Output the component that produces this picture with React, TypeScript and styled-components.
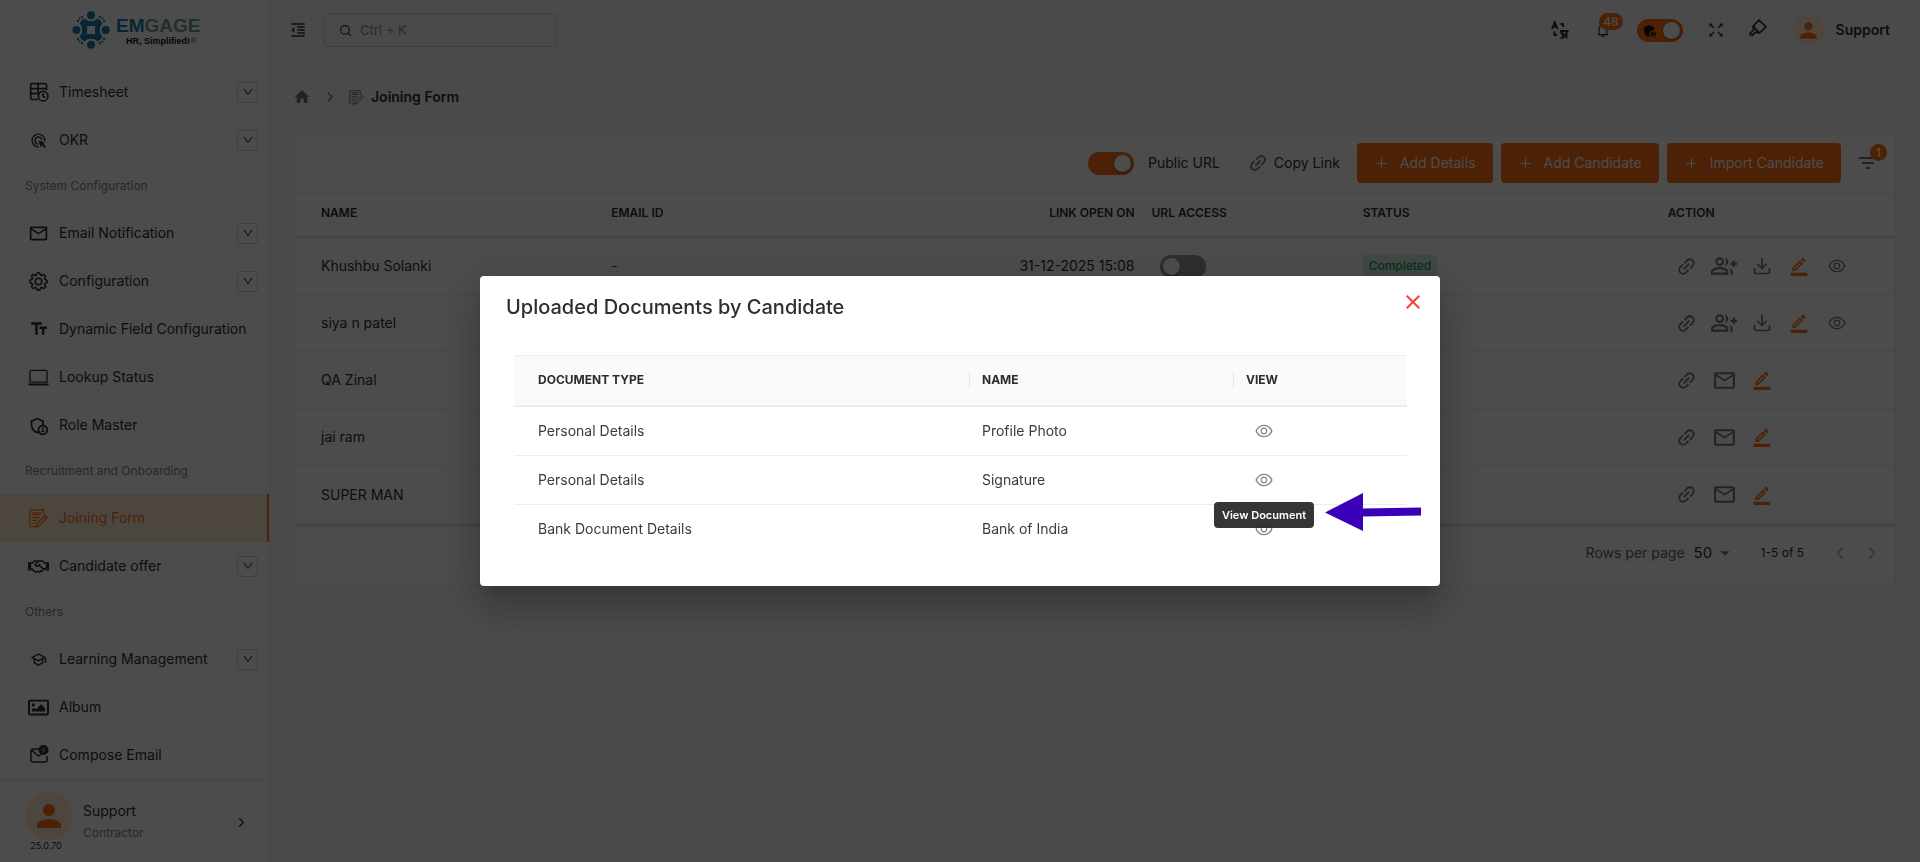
import React from "react";
import styled, { createGlobalStyle, css } from "styled-components";
import {
  MdAdsClick, MdMailOutline, MdTextFields, MdOutlineAdminPanelSettings, MdAdminPanelSettings,
  MdOutlineSchool, MdFormatIndentDecrease, MdPerson, MdHome, MdLink,
  MdOutlineGroupAdd, MdOutlineBorderColor, MdFilterList, MdArrowDropDown,
} from "react-icons/md";
import { BsLaptop, BsGear } from "react-icons/bs";
import { FaRegHandshake, FaRegImage } from "react-icons/fa";
import { AiOutlineBell, AiOutlineEye, AiOutlineDown, AiOutlinePlus } from "react-icons/ai";
import { LuChevronLeft, LuChevronRight, LuDownload, LuSearch } from "react-icons/lu";

const c = {
  orange: "#fd7011",
  ink: "#2f2f33",
  text: "#3a3a3f",
  muted: "#858585",
  line: "#ececec",
};

const Global = createGlobalStyle`
  *, *::before, *::after { box-sizing: border-box; }
  body {
    margin: 0;
    font-family: Inter, "Liberation Sans", sans-serif;
    font-size: 14px;
    line-height: 20px;
    color: ${c.ink};
    background: #f8f8f8;
  }
  button, input, select { font: inherit; color: inherit; }
  svg { display: block; flex: none; }
`;

/* ---------- drawings ---------- */

const TimesheetIcon = () => (
  <svg width="20" height="20" viewBox="0 0 24 24" fill="none" stroke="currentColor" strokeWidth="2">
    <path d="M11 21H4a2 2 0 0 1-2-2V4a2 2 0 0 1 2-2h15a2 2 0 0 1 2 2v6M2 8h19M2 14h9M11 2v12" />
    <circle cx="17" cy="17" r="5.700" />
    <path d="M17 13.500v3.500l2.500 1.500" />
  </svg>
);

const FormIcon = ({ size }: { size: number }) => (
  <svg width={size} height={size} viewBox="0 0 20 20" fill="none" stroke="currentColor" strokeWidth="1.300">
    <path d="M15 6V1H1v17.500h8" />
    <path d="M3.500 4h9M3.500 6h9M3.500 9h8M3.500 12h5M3.500 15h4" />
    <path d="M17 6.500l2.300 2.200-8.300 9-3.200 1.300.8-3.300zM15.300 8.300l2.300 2.200" />
  </svg>
);

const ComposeIcon = () => (
  <svg width="20" height="20" viewBox="0 0 20 20" fill="none" stroke="currentColor" strokeWidth="1.500">
    <path d="M10 4H4a2 2 0 0 0-2 2v9a2 2 0 0 0 2 2h12a2 2 0 0 0 2-2v-4M2.500 5l7 6 3-2" />
    <circle cx="14.500" cy="5" r="5" fill="currentColor" stroke="none" />
    <path d="M14.500 2.500v5M12 5h5" stroke="#fff" strokeWidth="1" opacity=".5" />
  </svg>
);

const TranslateIcon = () => (
  <svg width="18" height="18" viewBox="0 0 18 18" fill="none" stroke="currentColor" strokeWidth="1.900">
    <path d="M1 8l2.700-7L6.500 8M2 5.800h3.500" />
    <path d="M9.500 3H12v3M3.500 10.500V14H6" />
    <path d="M9 10h8.500M15.500 10v7.500M9.500 12.300c2.500-1 3.500 1 1.500 1.800 3 .2 2 3.400-1.500 2.400M12 14.200h3.500" />
  </svg>
);

const ExpandIcon = () => (
  <svg width="14" height="14" viewBox="0 0 14 14" fill="none" stroke="currentColor" strokeWidth="1.200">
    <path d="M1 3.500V1h2.500M1 1l4 4M10.500 1H13v2.500M13 1L9 5M1 10.500V13h2.500M1 13l4-4M10.500 13H13v-2.500M13 13L9 9" />
  </svg>
);

const BrushIcon = () => (
  <svg width="18" height="22" viewBox="0 0 18 22" fill="none" stroke="currentColor" strokeWidth="1.700" strokeLinejoin="round">
    <path d="M10 1l7 6.800-6.500 6-6.500-6.500zM5.500 6.500L4 8.500l1 2-3.500 3.500c-1.200 1.500.5 3.200 2 2L7 12.800l2 1.200 1.500-.5" />
  </svg>
);

const CloseIcon = () => (
  <svg width="14" height="14" viewBox="0 0 14 14" fill="none" stroke="currentColor" strokeWidth="2">
    <path d="M.7.700l12.600 12.600M13.300.700L.7 13.300" />
  </svg>
);

const LogoMark = () => (
  <svg width="38" height="38" viewBox="0 0 38 38" fill="#1b7cab">
    {[0, 90, 180, 270].map((a) => (
      <g key={a} transform={`rotate(${a} 19 19)`}>
        <circle cx="19" cy="4.300" r="4" />
        <path d="M12.500 7.500c2 2 4 2.700 6.500 2.700s4.500-.7 6.500-2.700l3 2c-1.500 3-4 5-6 5.500h-7c-2-.5-4.500-2.500-6-5.500z" />
        <circle cx="10" cy="6" r="1.200" />
        <circle cx="7.500" cy="7.500" r="1" />
        <circle cx="28" cy="6" r="1.200" />
      </g>
    ))}
  </svg>
);

/* ---------- shared controls ---------- */

const IconButton = styled.button<{ $tone?: string }>`
  display: inline-flex;
  align-items: center;
  justify-content: center;
  padding: 0;
  border: 0;
  background: none;
  color: ${(p) => p.$tone ?? c.ink};
  cursor: pointer;
`;

const Switch = styled.input.attrs({ type: "checkbox" })`
  appearance: none;
  flex: none;
  width: 46px;
  height: 23px;
  margin: 0;
  padding: 3px;
  border-radius: 12px;
  background: #9a9a9a;
  display: flex;
  cursor: pointer;
  &::before {
    content: "";
    width: 17px;
    height: 17px;
    border-radius: 50%;
    background: #fff;
    box-shadow: 0 1px 3px rgba(0, 0, 0, 0.4);
  }
  &:checked {
    background: ${c.orange};
    justify-content: flex-end;
  }
`;

const Badge = styled.span`
  position: absolute;
  top: -9px;
  right: -12px;
  min-width: 17px;
  height: 17px;
  padding: 0 4px;
  border-radius: 9px;
  background: ${c.orange};
  color: #fff;
  font-size: 12px;
  font-weight: 500;
  line-height: 17px;
  text-align: center;
`;

const Avatar = styled.span<{ $size: number }>`
  display: flex;
  align-items: center;
  justify-content: center;
  width: ${(p) => p.$size}px;
  height: ${(p) => p.$size}px;
  border-radius: 50%;
  background: #fdead2;
  color: ${c.orange};
`;

/* ---------- shell ---------- */

const Shell = styled.div`
  display: grid;
  grid-template-columns: 270px minmax(0, 1fr);
  min-height: 100vh;
`;

const Sidebar = styled.aside`
  display: flex;
  flex-direction: column;
  background: #fff;
  border-right: 1px solid ${c.line};
`;

const Brand = styled.a`
  display: flex;
  gap: 6px;
  height: 68px;
  padding: 11px 0 0 72px;
  text-decoration: none;
`;

const BrandText = styled.span`
  display: flex;
  flex-direction: column;
  padding-top: 6px;
  font-family: "Liberation Sans Narrow", "Liberation Sans", sans-serif;
  font-weight: 700;
`;

const BrandName = styled.span`
  font-size: 19px;
  line-height: 18px;
  color: #1b7cab;
  span { color: #6ca58c; }
`;

const BrandTag = styled.span`
  padding-left: 10px;
  font-size: 9px;
  line-height: 13px;
  color: #111;
  white-space: nowrap;
  span { color: #1b7cab; font-weight: 400; }
`;

const NavLink = styled.a<{ $active?: boolean }>`
  display: flex;
  align-items: center;
  gap: 10px;
  height: 48px;
  padding: 0 11px 0 28px;
  color: ${(p) => (p.$active ? c.orange : c.ink)};
  text-decoration: none;
  white-space: nowrap;
  ${(p) => p.$active && css`
    background: #fdead2;
    border-right: 2px solid ${c.orange};
  `}
`;

const NavIcon = styled.span`
  display: flex;
  justify-content: center;
  width: 21px;
`;

const Chevron = styled.span`
  display: flex;
  align-items: center;
  justify-content: center;
  width: 21px;
  height: 21px;
  margin-left: auto;
  border: 1px solid #d4d4d4;
  border-radius: 3px;
`;

const NavLabel = styled.div`
  height: 45px;
  padding: 12px 0 0 25px;
  font-size: 12px;
  color: ${c.muted};
`;

const Profile = styled.div`
  display: flex;
  gap: 10px;
  flex: 1;
  padding: 12px 20px 0 25px;
  border-top: 1px solid #e6e6e6;
`;

const Version = styled.div`
  font-size: 9px;
  line-height: 12px;
  text-align: center;
  padding-right: 6px;
`;

const ProfileName = styled.div`
  flex: 1;
  padding-top: 9px;
  small { display: block; font-size: 12px; line-height: 24px; color: ${c.muted}; }
`;

const ProfileButton = styled(IconButton)`
  height: 60px;
`;

const Main = styled.main`
  display: flex;
  flex-direction: column;
`;

const TopBar = styled.header`
  display: flex;
  align-items: center;
  justify-content: space-between;
  height: 62px;
  padding: 0 30px 1px 19px;
  border-bottom: 1px solid ${c.line};
`;

const Group = styled.div<{ $gap: number }>`
  display: flex;
  align-items: center;
  gap: ${(p) => p.$gap}px;
`;

const SearchBox = styled.label`
  display: flex;
  align-items: center;
  gap: 6px;
  width: 233px;
  height: 34px;
  padding: 0 14px;
  border: 1px solid #d4d4d4;
  border-radius: 4px;
  input {
    width: 100%;
    border: 0;
    outline: 0;
    background: none;
    font-size: 13px;
    &::placeholder { color: #8f8f8f; opacity: 1; }
  }
`;

const BellWrap = styled(IconButton)`
  position: relative;
`;

const RoleToggle = styled.label`
  display: flex;
  position: relative;
  svg { position: absolute; left: 5px; top: 4px; color: #22160c; }
`;

const UserName = styled.span`
  font-weight: 600;
`;

const Crumbs = styled.nav`
  display: flex;
  align-items: center;
  height: 72px;
  padding: 0 0 2px 23px;
  font-weight: 600;
  color: #77777a;
  svg:nth-of-type(2) { margin: 0 11px; }
  span { color: ${c.ink}; margin-left: 7px; }
`;

const Card = styled.section`
  margin: 0 24px 0 25px;
  border: 1px solid ${c.line};
  border-radius: 4px;
  background: #fff;
`;

const Toolbar = styled.div`
  display: flex;
  align-items: center;
  justify-content: flex-end;
  height: 59px;
  padding: 0 15px 2px 0;
  border-bottom: 1px solid ${c.line};
`;

const SwitchLabel = styled.label`
  display: flex;
  align-items: center;
  gap: 14px;
  margin-right: 27px;
`;

const CopyLink = styled(IconButton)`
  gap: 5px;
  margin-right: 17px;
  svg { transform: rotate(-45deg); color: #77777a; }
`;

const Primary = styled.button`
  display: flex;
  align-items: center;
  gap: 11px;
  height: 40px;
  margin-right: 8px;
  padding: 0 17px;
  border: 0;
  border-radius: 4px;
  background: ${c.orange};
  color: #fff;
  white-space: nowrap;
  cursor: pointer;
`;

const FilterButton = styled(IconButton)`
  position: relative;
  margin-left: 7px;
`;

const FilterBadge = styled(Badge)`
  top: -7px;
  right: -7px;
`;

const Grid = styled.table`
  width: 100%;
  table-layout: fixed;
  border-collapse: separate;
  border-spacing: 0;
  th {
    height: 44px;
    padding: 0 10px 5px;
    border-bottom: 2px solid #e4e4e4;
    font-size: 12px;
    font-weight: 600;
    text-align: left;
  }
  td {
    height: 57px;
    padding: 0 10px;
    border-bottom: 1px solid ${c.line};
  }
  th:first-child, td:first-child { padding-left: 25px; }
  th:nth-child(3), td:nth-child(3) { text-align: right; }
  th:nth-child(4) { padding-left: 7px; }
  td:nth-child(4) { padding-left: 15px; }
  tbody tr:last-child td { height: 58px; }
`;

const Completed = styled.span`
  display: inline-block;
  padding: 0 6px;
  border-radius: 3px;
  background: #d6efe2;
  color: #1c9a5e;
  font-size: 12px;
  font-weight: 500;
  line-height: 22px;
`;

const Actions = styled.div`
  display: grid;
  grid-template-columns: repeat(5, 1fr);
  width: 188px;
  justify-items: center;
`;

const TiltedLink = styled(MdLink)`
  transform: rotate(-45deg);
`;

const Pager = styled.footer`
  display: flex;
  align-items: center;
  justify-content: flex-end;
  height: 60px;
  padding: 0 13px 5px 0;
  border-top: 3px solid #e6e6e6;
`;

const RowsLabel = styled.label`
  display: flex;
  align-items: center;
  gap: 9px;
  margin-right: 25px;
  color: #66666a;
`;

const RowsSelect = styled.span`
  display: flex;
  align-items: center;
  color: ${c.ink};
  select {
    appearance: none;
    width: 20px;
    padding: 0;
    border: 0;
    outline: 0;
    background: none;
    font-size: 15px;
  }
`;

const Range = styled.span`
  margin-right: 26px;
  font-size: 12px;
`;

/* ---------- dialog ---------- */

const Backdrop = styled.div`
  position: fixed;
  inset: 0;
  display: flex;
  align-items: center;
  justify-content: center;
  background: rgba(0, 0, 0, 0.7);
`;

const Dialog = styled.div`
  position: relative;
  width: 100%;
  max-width: 960px;
  padding: 17px 33px 32px 34px;
  border-radius: 4px;
  background: #fff;
  box-shadow: 0 11px 15px -7px rgba(0, 0, 0, 0.2), 0 24px 38px 3px rgba(0, 0, 0, 0.14),
    0 9px 46px 8px rgba(0, 0, 0, 0.12);
`;

const DialogHead = styled.div`
  display: flex;
  align-items: flex-start;
  justify-content: space-between;
  height: 62px;
  margin: 0 -13px 0 -8px;
  h2 { margin: 0; font-size: 20px; line-height: 28px; font-weight: 500; }
`;

const CloseButton = styled(IconButton)`
  height: 16px;
  align-items: flex-end;
`;

const DocTable = styled.table`
  width: 100%;
  table-layout: fixed;
  border-collapse: separate;
  border-spacing: 0;
  color: ${c.text};
  th {
    height: 52px;
    padding: 0 0 1px;
    border-top: 1px solid #ededed;
    border-bottom: 2px solid #ececec;
    background: #fafafa;
    color: #2c2c2e;
    font-size: 12px;
    line-height: 18px;
    font-weight: 700;
    text-align: left;
  }
  th span { display: block; padding-left: 12px; border-left: 1px solid #e9e9e9; }
  td { height: 49px; padding: 0 0 0 13px; border-bottom: 1px solid #ededed; }
  tr > :first-child { padding-left: 24px; }
  th:first-child span { padding-left: 0; border: 0; }
  tbody tr:last-child td { border-bottom-color: transparent; }
  td:last-child { padding: 0 0 2px 21px; }
`;

const ViewButton = styled(IconButton)`
  position: relative;
  vertical-align: middle;
`;

const Tooltip = styled.span`
  position: absolute;
  left: 50%;
  bottom: 11px;
  transform: translateX(-50%);
  padding: 0 8px;
  border-radius: 4px;
  background: rgba(40, 40, 42, 0.94);
  color: #fff;
  font-size: 11px;
  font-weight: 600;
  line-height: 26px;
  white-space: nowrap;
`;

const Pointer = styled.svg`
  position: absolute;
  right: 19px;
  bottom: 55px;
`;

/* ---------- data ---------- */

type NavItem = { label: string; icon?: React.ReactNode; open?: boolean; active?: boolean };

const nav: NavItem[] = [
  { label: "Timesheet", icon: <TimesheetIcon />, open: true },
  { label: "OKR", icon: <MdAdsClick size={17} />, open: true },
  { label: "System Configuration" },
  { label: "Email Notification", icon: <MdMailOutline size={21} />, open: true },
  { label: "Configuration", icon: <BsGear size={19} strokeWidth={0.5} />, open: true },
  { label: "Dynamic Field Configuration", icon: <MdTextFields size={20} /> },
  { label: "Lookup Status", icon: <BsLaptop size={21} /> },
  { label: "Role Master", icon: <MdOutlineAdminPanelSettings size={21} /> },
  { label: "Recruitment and Onboarding" },
  { label: "Joining Form", icon: <FormIcon size={19} />, active: true },
  { label: "Candidate offer", icon: <FaRegHandshake size={21} />, open: true },
  { label: "Others" },
  { label: "Learning Management", icon: <MdOutlineSchool size={17} />, open: true },
  { label: "Album", icon: <FaRegImage size={21} /> },
  { label: "Compose Email", icon: <ComposeIcon /> },
];

const candidates = [
  { name: "Khushbu Solanki", email: "-", opened: "31-12-2025 15:08", urlAccess: true, done: true },
  { name: "siya n patel", done: true },
  { name: "QA Zinal" },
  { name: "jai ram" },
  { name: "SUPER MAN" },
];

const documents = [
  ["Personal Details", "Profile Photo"],
  ["Personal Details", "Signature"],
  ["Bank Document Details", "Bank of India"],
];

const gray = "#77777a";

export default function App() {
  return (
    <>
      <Global />
      <Shell>
        <Sidebar>
          <Brand href="#home">
            <LogoMark />
            <BrandText>
              <BrandName>EM<span>GAGE</span></BrandName>
              <BrandTag>HR, Simplified!<span>®</span></BrandTag>
            </BrandText>
          </Brand>
          <nav>
            {nav.map((n) =>
              n.icon ? (
                <NavLink key={n.label} href="#nav" $active={n.active}>
                  <NavIcon>{n.icon}</NavIcon>
                  {n.label}
                  {n.open && <Chevron><AiOutlineDown size={12} /></Chevron>}
                </NavLink>
              ) : (
                <NavLabel key={n.label}>{n.label}</NavLabel>
              )
            )}
          </nav>
          <Profile>
            <div>
              <Avatar $size={48}><MdPerson size={36} /></Avatar>
              <Version>25.0.70</Version>
            </div>
            <ProfileName>Support<small>Contractor</small></ProfileName>
            <ProfileButton aria-label="Open profile"><LuChevronRight size={15} /></ProfileButton>
          </Profile>
        </Sidebar>

        <Main>
          <TopBar>
            <Group $gap={17}>
              <IconButton aria-label="Collapse menu"><MdFormatIndentDecrease size={18} /></IconButton>
              <SearchBox>
                <LuSearch size={13} />
                <input placeholder="Ctrl + K" aria-label="Search" />
              </SearchBox>
            </Group>
            <Group $gap={26}>
              <IconButton aria-label="Language"><TranslateIcon /></IconButton>
              <BellWrap aria-label="Notifications"><AiOutlineBell size={16} /><Badge>48</Badge></BellWrap>
              <RoleToggle>
                <Switch defaultChecked aria-label="Admin mode" />
                <MdAdminPanelSettings size={16} />
              </RoleToggle>
              <IconButton aria-label="Full screen"><ExpandIcon /></IconButton>
              <IconButton aria-label="Theme"><BrushIcon /></IconButton>
              <Group $gap={11}>
                <Avatar $size={32}><MdPerson size={25} /></Avatar>
                <UserName>Support</UserName>
              </Group>
            </Group>
          </TopBar>

          <Crumbs aria-label="Breadcrumb">
            <MdHome size={18} />
            <LuChevronRight size={16} />
            <FormIcon size={15} />
            <span>Joining Form</span>
          </Crumbs>

          <Card>
            <Toolbar>
              <SwitchLabel><Switch defaultChecked />Public URL</SwitchLabel>
              <CopyLink><MdLink size={22} />Copy Link</CopyLink>
              <Primary><AiOutlinePlus size={15} />Add Details</Primary>
              <Primary><AiOutlinePlus size={15} />Add Candidate</Primary>
              <Primary><AiOutlinePlus size={15} />Import Candidate</Primary>
              <FilterButton aria-label="Filter" $tone={gray}><MdFilterList size={24} /><FilterBadge>1</FilterBadge></FilterButton>
            </Toolbar>
            <Grid>
              <colgroup>
                <col style={{ width: 305 }} /><col style={{ width: 300 }} /><col style={{ width: 243 }} />
                <col style={{ width: 208 }} /><col style={{ width: 305 }} /><col style={{ width: 237 }} />
              </colgroup>
              <thead>
                <tr><th>NAME</th><th>EMAIL ID</th><th>LINK OPEN ON</th><th>URL ACCESS</th><th>STATUS</th><th>ACTION</th></tr>
              </thead>
              <tbody>
                {candidates.map((r) => (
                  <tr key={r.name}>
                    <td>{r.name}</td>
                    <td>{r.email}</td>
                    <td>{r.opened}</td>
                    <td>{r.urlAccess && <Switch aria-label={`URL access for ${r.name}`} />}</td>
                    <td>{r.urlAccess && <Completed>Completed</Completed>}</td>
                    <td>
                      <Actions>
                        <IconButton aria-label="Link" $tone={gray}><TiltedLink size={23} /></IconButton>
                        {r.done ? (
                          <>
                            <IconButton aria-label="Assign" $tone={gray}><MdOutlineGroupAdd size={26} /></IconButton>
                            <IconButton aria-label="Download" $tone={gray}><LuDownload size={20} /></IconButton>
                          </>
                        ) : (
                          <IconButton aria-label="Mail" $tone={gray}><MdMailOutline size={25} /></IconButton>
                        )}
                        <IconButton aria-label="Edit" $tone={c.orange}><MdOutlineBorderColor size={20} /></IconButton>
                        {r.done && <IconButton aria-label="View" $tone={gray}><AiOutlineEye size={20} /></IconButton>}
                      </Actions>
                    </td>
                  </tr>
                ))}
              </tbody>
            </Grid>
            <Pager>
              <RowsLabel>
                Rows per page
                <RowsSelect>
                  <select defaultValue="50"><option>50</option></select>
                  <MdArrowDropDown size={22} color={gray} />
                </RowsSelect>
              </RowsLabel>
              <Range>1-5 of 5</Range>
              <Group $gap={12}>
                <IconButton aria-label="Previous page" $tone="#b4b4b4"><LuChevronLeft size={20} /></IconButton>
                <IconButton aria-label="Next page" $tone="#b4b4b4"><LuChevronRight size={20} /></IconButton>
              </Group>
            </Pager>
          </Card>
        </Main>
      </Shell>

      <Backdrop>
        <Dialog role="dialog" aria-labelledby="docs-title">
          <DialogHead>
            <h2 id="docs-title">Uploaded Documents by Candidate</h2>
            <CloseButton aria-label="Close" $tone="#f44336"><CloseIcon /></CloseButton>
          </DialogHead>
          <DocTable>
            <colgroup>
              <col style={{ width: 455 }} /><col style={{ width: 264 }} /><col style={{ width: 174 }} />
            </colgroup>
            <thead>
              <tr><th><span>DOCUMENT TYPE</span></th><th><span>NAME</span></th><th><span>VIEW</span></th></tr>
            </thead>
            <tbody>
              {documents.map(([type, name], i) => (
                <tr key={name}>
                  <td>{type}</td>
                  <td>{name}</td>
                  <td>
                    <ViewButton aria-label="View Document" $tone="#858585">
                      <AiOutlineEye size={20} />
                      {i === 2 && <Tooltip role="tooltip">View Document</Tooltip>}
                    </ViewButton>
                  </td>
                </tr>
              ))}
            </tbody>
          </DocTable>
          <Pointer width="96" height="38" viewBox="0 0 96 38" fill="#3b00b9" aria-hidden="true">
            <path d="M0 19.500L38 0v15.500l58-1v8l-58 1V38z" />
          </Pointer>
        </Dialog>
      </Backdrop>
    </>
  );
}
